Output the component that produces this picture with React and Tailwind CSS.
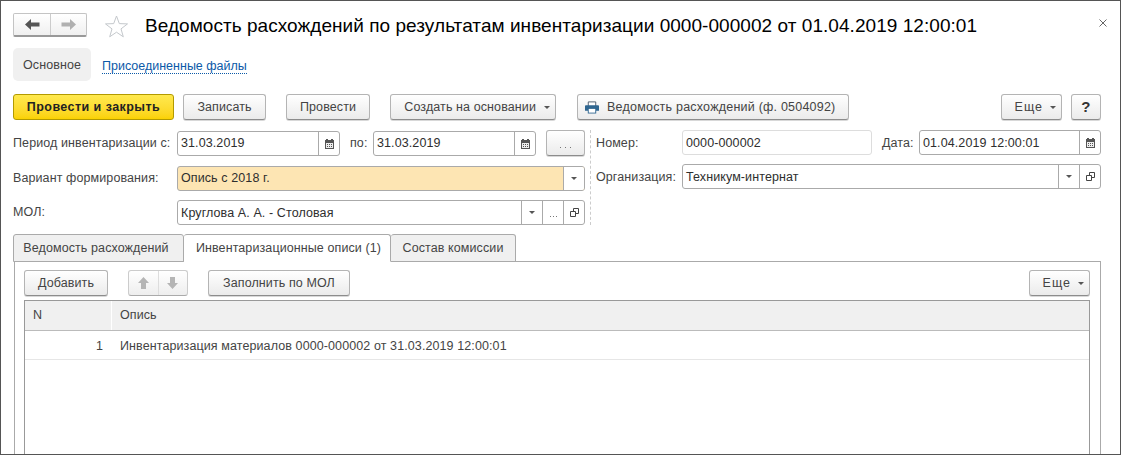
import React from "react";

const Caret = ({ className = "" }) => (
  <svg width="6" height="3" viewBox="0 0 6 3" className={className}><path d="M0 0h6L3 3z" fill="#555" /></svg>
);
const Calendar = () => (
  <svg width="9" height="10" viewBox="0 0 9 10">
    <path d="M1 0h2v1h3V0h2v1h1v9H0V1h1z" fill="#555" />
    <path d="M1 4h7v5H1z" fill="#eee" />
    <path d="M2 5h1v1H2zM4 5h1v1H4zM6 5h1v1H6zM2 7h1v1H2zM4 7h1v1H4zM6 7h1v1H6z" fill="#555" />
  </svg>
);
const OpenIcon = () => (
  <svg width="9" height="9" viewBox="0 0 9 9" fill="none" stroke="#444">
    <path d="M3.500 3V.5h5v5H6" />
    <path d="M.5 3.500h5v5h-5z" fill="#fff" />
  </svg>
);
const Dots = ({ gap = "gap-[2px]" }) => (
  <span className={`flex ${gap} pt-[8px]`}>
    <i className="block w-[1px] h-[1px] bg-[#777]" /><i className="block w-[1px] h-[1px] bg-[#777]" /><i className="block w-[1px] h-[1px] bg-[#777]" />
  </span>
);

const btn =
  "flex items-center justify-center h-[26px] shrink-0 rounded-[3px] border border-[#b4b4b4] border-b-[#8c8c8c] bg-linear-to-b from-white to-[#ebebeb] shadow-[0_1px_0_#d8d8d8] text-[#444]";

const Btn = ({ w, children, className = "" }) => (
  <div className={`${btn} ${w} ${className}`}>{children}</div>
);

const More = ({ w }) => (
  <Btn w={`w-[61px] ${w}`} className="!justify-end pr-[5px]">
    <span className="tracking-[1px]">Еще</span><Caret className="ml-[7px]" />
  </Btn>
);

const Seg = ({ children }) => (
  <div className="w-[21px] h-full shrink-0 flex items-center justify-center border-l border-[#aaa]">{children}</div>
);

const Field = ({ w, text, bg = "bg-white", children, border = "border-[#aaa]", h = "h-[25px]", pt = "" }) => (
  <div className={`flex items-center shrink-0 ${w} ${h} rounded-[3px] border ${border} ${bg} overflow-hidden`}>
    <div className={`flex-1 pl-[3px] text-[#2e2e2e] truncate ${pt}`}>{text}</div>
    {children}
  </div>
);

const Label = ({ w, children, className = "" }) => (
  <div className={`shrink-0 text-[#444] whitespace-nowrap ${w} ${className}`}>{children}</div>
);

export default function App() {
  return (
    <div className="w-[1121px] h-[455px] overflow-hidden bg-white border border-[#555] pl-[12px] pr-[19px] pt-[12px] text-[12.5px] tracking-[0.1px] font-['Liberation_Sans',Arial,sans-serif]">
      {/* header */}
      <div className="flex items-center h-[24px]">
        <div className="flex w-[74px] h-[24px] rounded-[2px] border border-[#c4c4c4] border-b-[#999] border-b-2 bg-linear-to-b from-white to-[#f0f0f0]">
          <div className="w-[37px] flex items-center justify-center border-r border-[#ccc]">
            <svg width="15" height="11" viewBox="0 0 15 11"><path d="M0 5.500 6 0v3.500h8.500v4H6V11z" fill="#555" /></svg>
          </div>
          <div className="flex-1 flex items-center justify-center">
            <svg width="15" height="11" viewBox="0 0 15 11"><path d="M15 5.500 9 0v3.500H.5v4H9V11z" fill="#b0b0b0" /></svg>
          </div>
        </div>
        <svg className="ml-[17px] mt-[2px]" width="25" height="23" viewBox="0 0 25 23" fill="#fff" stroke="#c4c8cc">
          <path d="M12.500 1 15.300 8.600 23.500 8.900 17 13.900 19.300 21.800 12.500 17.200 5.700 21.800 8 13.900 1.500 8.900 9.700 8.600z" />
        </svg>
        <div className="ml-[16px] pt-[2px] text-[19px] tracking-[0.05px] text-black whitespace-nowrap">
          Ведомость расхождений по результатам инвентаризации 0000-000002 от 01.04.2019 12:00:01
        </div>
        <svg className="ml-auto -mr-[6px] -mt-[5px]" width="8" height="8" viewBox="0 0 8 8" stroke="#666"><path d="M.5.5l7 7M7.500.5l-7 7" /></svg>
      </div>

      {/* section tabs */}
      <div className="flex items-center mt-[11px] h-[33px]">
        <div className="w-[78px] h-full flex items-center justify-center rounded-[5px] bg-[#f0f0f0] text-[#444] pt-[2px]">Основное</div>
        <div className="ml-[11px] text-[#0b5aa8] border-b border-dotted border-[#0b5aa8] leading-[13px] mt-[4px] tracking-[0px]">Присоединенные файлы</div>
      </div>

      {/* command bar */}
      <div className="flex items-center mt-[13px]">
        <div className="flex items-center justify-center w-[161px] h-[26px] rounded-[3px] border border-[#b39a00] bg-linear-to-b from-[#ffe94d] to-[#fbd200] font-bold text-[#222] tracking-[0.45px]">Провести и закрыть</div>
        <Btn w="w-[83px] ml-[9px]">Записать</Btn>
        <Btn w="w-[84px] ml-[20px]">Провести</Btn>
        <Btn w="w-[166px] ml-[20px]" className="!justify-end pr-[5px]">Создать на основании<Caret className="ml-[8px]" /></Btn>
        <Btn w="w-[272px] ml-[21px]" className="!justify-start pl-[7px] tracking-[0.22px]">
          <svg width="14" height="13" viewBox="0 0 15 13" className="mr-[8px]">
            <path d="M3.500 .5h8v5h-8z" fill="#fff" stroke="#4a5a6a" />
            <path d="M1 4h13a1 1 0 0 1 1 1v5h-3v3H3v-3H0V5a1 1 0 0 1 1-1z" fill="#2f6690" />
            <path d="M4 8h7v4H4z" fill="#fff" />
          </svg>
          Ведомость расхождений (ф. 0504092)
        </Btn>
        <More w="ml-auto" />
        <Btn w="w-[30px] ml-[9px]"><span className="text-[15px] font-bold text-[#333]">?</span></Btn>
      </div>

      {/* form */}
      <div className="flex mt-[10px] h-[95px]">
        <div className="w-[572px] shrink-0 flex flex-col">
          <div className="flex items-end h-[26px]">
            <Label w="w-[164px]" className="self-center">Период инвентаризации с:</Label>
            <Field w="w-[163px]" text="31.03.2019"><Seg><Calendar /></Seg></Field>
            <Label w="w-[33px]" className="pl-[10px] self-center">по:</Label>
            <Field w="w-[163px]" text="31.03.2019"><Seg><Calendar /></Seg></Field>
            <Btn w="w-[39px] ml-[10px] self-start"><Dots gap="gap-[4px]" /></Btn>
          </div>
          <div className="flex items-center mt-[10px] h-[25px]">
            <Label w="w-[164px]">Вариант формирования:</Label>
            <Field w="w-[408px]" text="Опись с 2018 г." bg="bg-[#fde5b3]">
              <div className="w-[21px] h-full shrink-0 flex items-center justify-center border-l border-[#aaa] bg-white"><Caret /></div>
            </Field>
          </div>
          <div className="flex items-center mt-[9px] h-[25px]">
            <Label w="w-[164px]">МОЛ:</Label>
            <Field w="w-[408px]" text="Круглова А. А. - Столовая" pt="pt-[2px]">
              <Seg><Caret /></Seg><Seg><Dots /></Seg><Seg><OpenIcon /></Seg>
            </Field>
          </div>
        </div>
        <div className="ml-[5px] mr-[5px] border-l border-dashed border-[#ccc]" />
        <div className="flex-1 flex flex-col">
          <div className="flex items-center h-[25px]">
            <Label w="w-[86px]" className="pt-[2px]">Номер:</Label>
            <Field w="w-[190px]" text="0000-000002" border="border-[#ddd]" pt="pt-[2px]" />
            <Label w="w-[47px]" className="pl-[10px] pt-[2px]">Дата:</Label>
            <Field w="w-[182px]" text="01.04.2019 12:00:01" pt="pt-[2px]"><Seg><Calendar /></Seg></Field>
          </div>
          <div className="flex items-center mt-[9px] h-[25px]">
            <Label w="w-[86px]" className="pt-[2px]">Организация:</Label>
            <Field w="w-[419px]" text="Техникум-интернат" pt="pt-[2px]"><Seg><Caret /></Seg><Seg><OpenIcon /></Seg></Field>
          </div>
        </div>
      </div>

      {/* tabs */}
      <div className="flex mt-[9px] h-[28px] relative z-10">
        <div className="w-[171px] h-[28px] flex items-center justify-center pr-[5px] border border-[#aaa] rounded-t-[3px] bg-[#f0f0f0] text-[#444]">Ведомость расхождений</div>
        <div className="w-[207px] h-[28px] flex items-center justify-center pl-[3px] border border-l-0 border-[#aaa] border-b-white rounded-t-[3px] bg-white text-[#444]">Инвентаризационные описи (1)</div>
        <div className="w-[125px] h-[28px] flex items-center justify-center border border-l-0 border-[#aaa] rounded-t-[3px] bg-[#f0f0f0] text-[#444]">Состав комиссии</div>
      </div>
      <div className="-mt-[1px] h-[194px] border border-[#aaa] border-b-0 ml-[1px] pl-[9px] pr-[10px] pt-[8px]">
        <div className="flex items-center">
          <Btn w="w-[84px]">Добавить</Btn>
          <div className="ml-[20px] flex w-[60px] h-[26px] rounded-[3px] border border-[#ccc] border-b-[#aaa] bg-linear-to-b from-white to-[#eee]">
            <div className="flex-1 flex items-center justify-center border-r border-[#ddd]">
              <svg width="11" height="12" viewBox="0 0 11 12"><path d="M5.500 0 11 6H8v6H3V6H0z" fill="#b5b5b5" /></svg>
            </div>
            <div className="flex-1 flex items-center justify-center">
              <svg width="11" height="12" viewBox="0 0 11 12"><path d="M5.500 12 11 6H8V0H3v6H0z" fill="#b5b5b5" /></svg>
            </div>
          </div>
          <Btn w="w-[142px] ml-[20px]">Заполнить по МОЛ</Btn>
          <More w="ml-auto" />
        </div>
        <div className="mt-[4px] h-[155px] border border-[#999] border-b-0 text-[#444]">
          <div className="flex h-[30px] bg-[#f0f0f0] border-b border-[#bbb] items-center">
            <div className="w-[87px] pl-[8px] h-full flex items-center border-r border-white">N</div>
            <div className="pl-[8px]">Опись</div>
          </div>
          <div className="flex h-[29px] border-b border-[#e6e6e6] items-center pt-[2px]">
            <div className="w-[78px] text-right shrink-0">1</div>
            <div className="pl-[17px]">Инвентаризация материалов 0000-000002 от 31.03.2019 12:00:01</div>
          </div>
        </div>
      </div>
    </div>
  );
}
